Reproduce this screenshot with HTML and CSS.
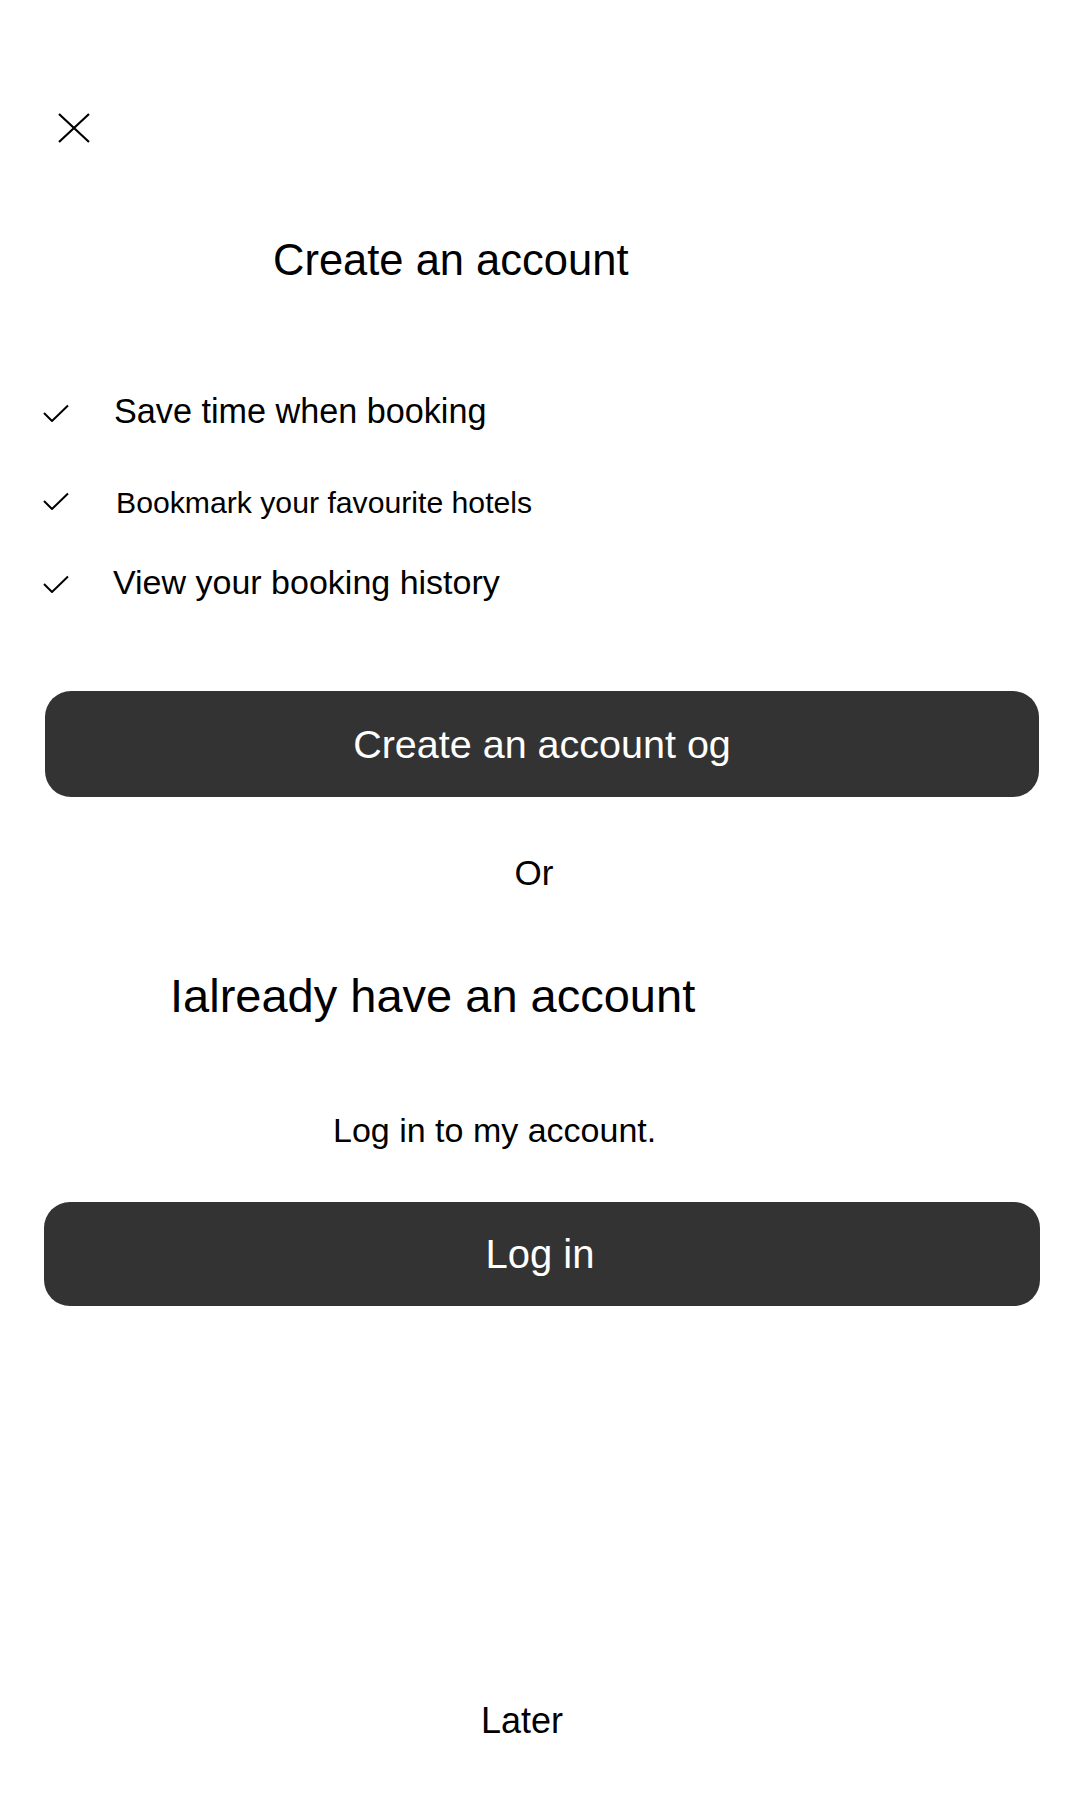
FILE: index.html
```html
<!DOCTYPE html>
<html lang="en">
<head>
<meta charset="utf-8">
<title>Create an account</title>
<link rel="stylesheet" href="styles.css">
</head>
<body>
<main class="sheet">
  <button class="close" aria-label="Close">
    <svg width="32" height="30" viewBox="0 0 32 30"><path d="M1 1 L31 29 M31 1 L1 29" stroke="#000" stroke-width="2.2" fill="none"/></svg>
  </button>

  <h1 class="title">Create an account</h1>

  <ul class="perks">
    <li class="perk perk-a">
      <svg class="tick" width="26" height="18" viewBox="0 0 26 18"><path d="M1 9 L9 17 L25 1.5" stroke="#000" stroke-width="2" fill="none"/></svg>
      <span class="perk-text">Save time when booking</span>
    </li>
    <li class="perk perk-b">
      <svg class="tick" width="26" height="18" viewBox="0 0 26 18"><path d="M1 9 L9 17 L25 1.5" stroke="#000" stroke-width="2" fill="none"/></svg>
      <span class="perk-text">Bookmark your favourite hotels</span>
    </li>
    <li class="perk perk-c">
      <svg class="tick" width="26" height="18" viewBox="0 0 26 18"><path d="M1 9 L9 17 L25 1.5" stroke="#000" stroke-width="2" fill="none"/></svg>
      <span class="perk-text">View your booking history</span>
    </li>
  </ul>

  <button class="btn btn-create">Create an account og</button>

  <p class="or">Or</p>

  <h2 class="already">Ialready have an account</h2>

  <p class="login-note">Log in to my account.</p>

  <button class="btn btn-login">Log in</button>

  <button class="later">Later</button>
</main>
</body>
</html>
```

FILE: styles.css
```css
* { box-sizing: border-box; }

html, body {
  margin: 0;
  padding: 0;
  background: #fff;
}

body {
  width: 1080px;
  height: 1800px;
  font-family: "Liberation Sans", Arial, sans-serif;
  color: #000;
}

.sheet {
  display: flex;
  flex-direction: column;
  align-items: flex-start;
  padding-top: 113px;
}

.close {
  margin: 0 0 0 58px;
  padding: 0;
  border: 0;
  background: none;
  width: 32px;
  height: 30px;
  display: block;
  line-height: 0;
}

.title {
  margin: 95px 0 0 273px;
  font-size: 43.5px;
  font-weight: 400;
  line-height: 44px;
}

.perks {
  list-style: none;
  margin: 112px 0 0 0;
  padding: 0;
  display: flex;
  flex-direction: column;
}

.perk {
  display: flex;
  align-items: flex-start;
  padding-left: 43px;
}

.perk-text {
  font-size: 34px;
  line-height: 34px;
  margin-left: 44px;
}

.tick { display: block; flex: none; }

.perk-a .tick { margin-top: 10px; }
.perk-a .perk-text { margin-left: 45px; font-size: 34.2px; }

.perk-b { margin-top: 60px; }
.perk-b .tick { margin-top: 4px; }
.perk-b .perk-text {
  font-size: 30.2px;
  line-height: 30px;
  margin-left: 47px;
}

.perk-c { margin-top: 47px; }
.perk-c .tick { margin-top: 10px; }

.btn {
  display: flex;
  align-items: center;
  justify-content: center;
  border: 0;
  background: #333333;
  color: #fff;
  font-family: "Liberation Sans", Arial, sans-serif;
  border-radius: 26px;
  padding: 0;
}

.btn-create {
  margin: 92px 0 0 45px;
  width: 994px;
  height: 106px;
  font-size: 39.5px;
}

.or {
  margin: 59px 0 0 0;
  align-self: stretch;
  padding-right: 12px;
  text-align: center;
  font-size: 35px;
  line-height: 34px;
}

.already {
  margin: 83px 0 0 170px;
  font-size: 47px;
  font-weight: 400;
  line-height: 46px;
}

.login-note {
  margin: 94px 0 0 333px;
  font-size: 34px;
  line-height: 34px;
}

.btn-login {
  margin: 55px 0 0 44px;
  width: 996px;
  height: 104px;
  font-size: 40px;
  padding-right: 4px;
}

.later {
  margin: 397px 0 0 481px;
  padding: 0;
  border: 0;
  background: none;
  color: #000;
  font-family: "Liberation Sans", Arial, sans-serif;
  font-size: 36px;
  line-height: 35px;
}
```
